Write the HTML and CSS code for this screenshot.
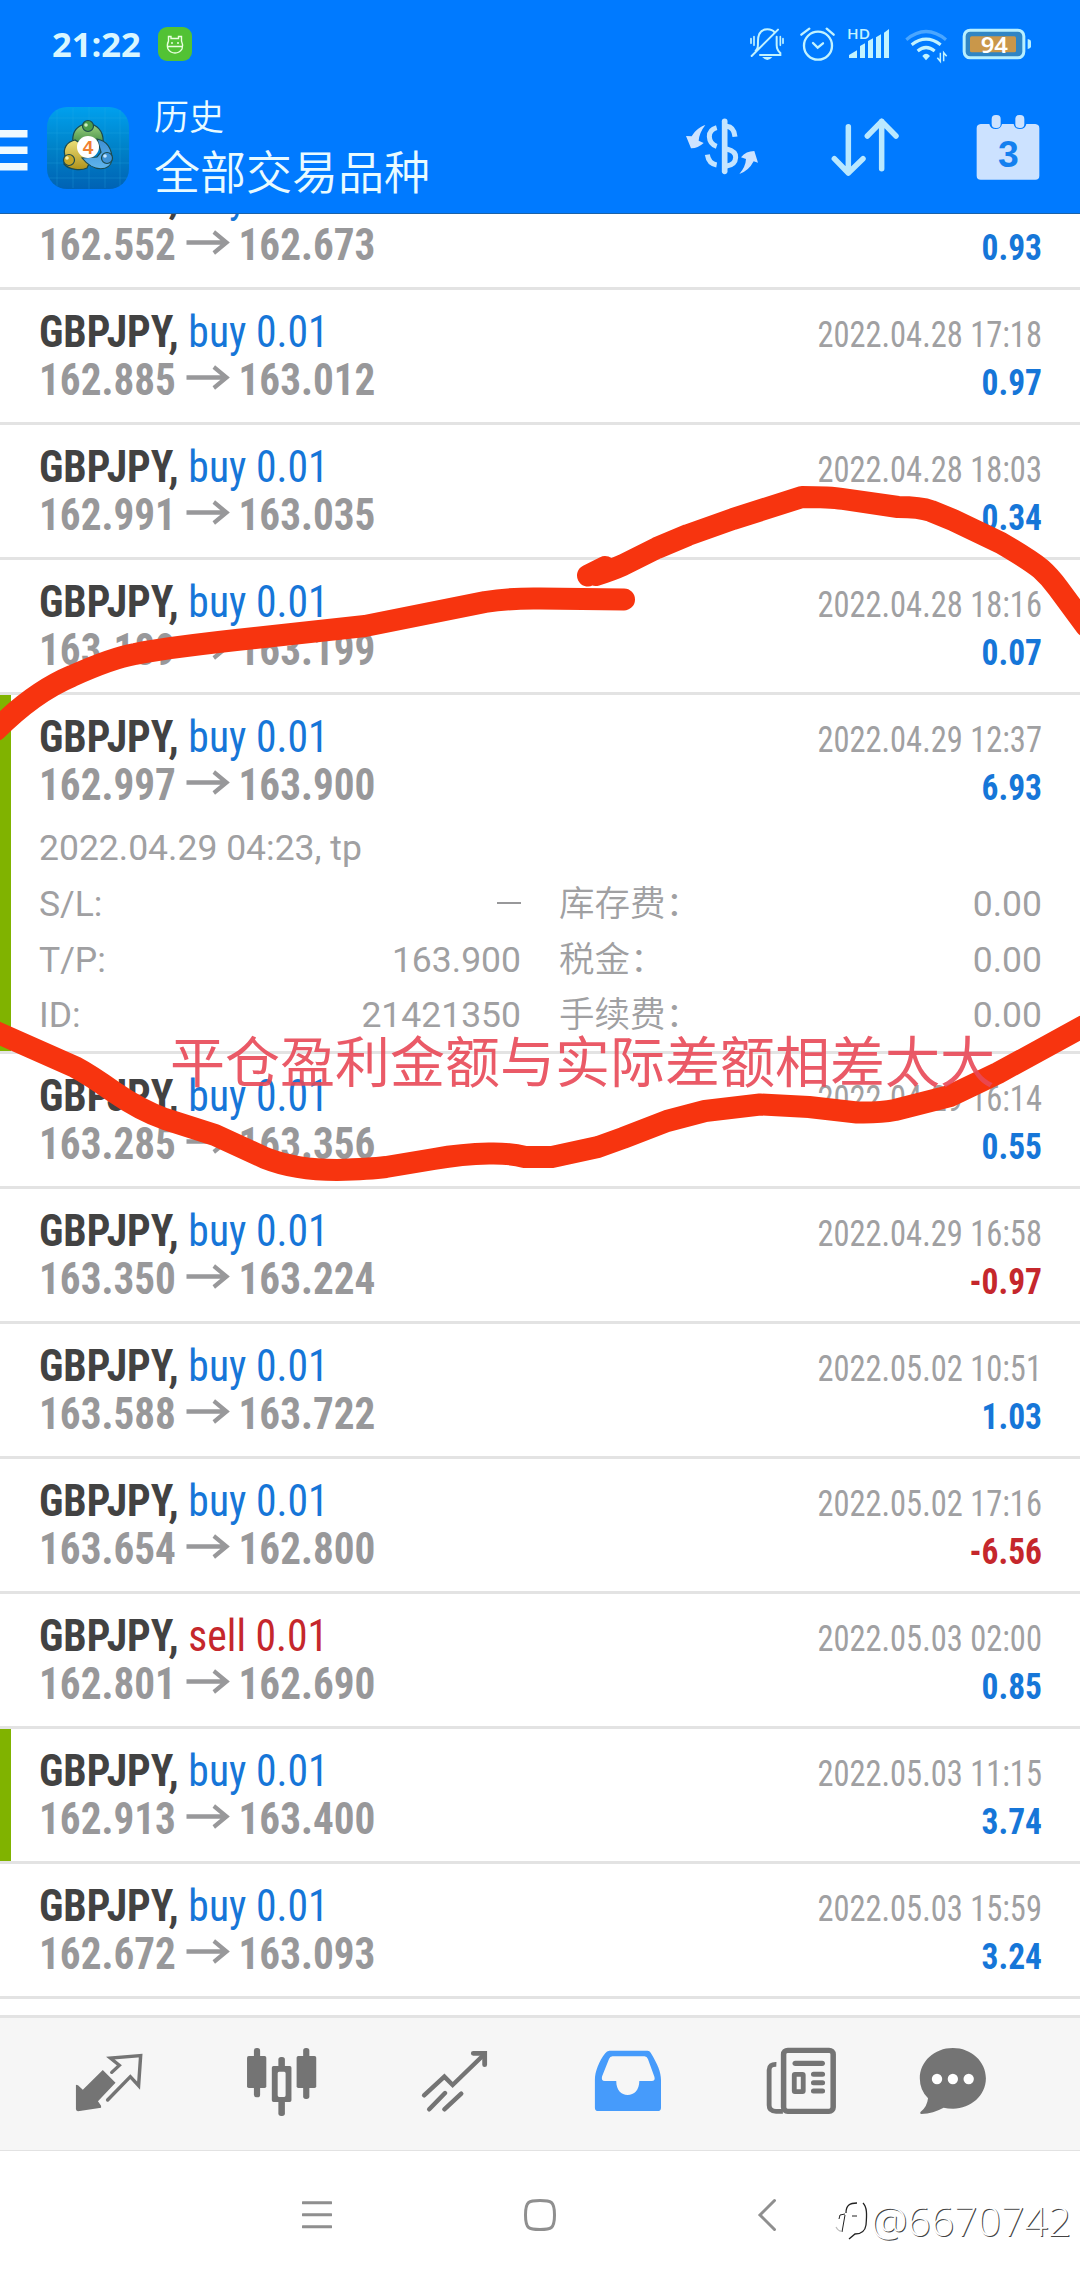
FILE: index.html
```html
<!DOCTYPE html>
<html lang="zh-CN">
<head>
<meta charset="utf-8">
<title>历史</title>
<link rel="stylesheet" href="styles.css">
</head>
<body>
<svg class="defs" width="0" height="0" aria-hidden="true">
  <symbol id="arrow" viewBox="0 0 44 24"><path d="M0 12H41M28 2L41 12L28 22" fill="none" stroke="currentColor" stroke-width="4.200"/></symbol>
</svg>
<div class="screen">
  <header class="top">
    <div class="status">
      <span class="clock">21:22</span>
      <svg class="app-badge" viewBox="0 0 34 34"><rect width="34" height="34" rx="9" fill="#52c234"/><g fill="none" stroke="#e9ffe0" stroke-width="1.4"><path d="M10.500 14V9.500H13V11.500H20.500V9.500H23.500V14Q25.500 18 24 22Q21.500 26 17 26Q12.500 26 10 22Q8.500 18 10.500 14ZM9.500 19.500H24.500"/></g><circle cx="14" cy="16" r="1" fill="#e9ffe0"/><circle cx="20" cy="16" r="1" fill="#e9ffe0"/></svg>
      <div class="status-icons">
        <svg width="40" height="40" viewBox="435 75 120 120" fill="none" stroke="#c2f3ff" stroke-width="6" stroke-linecap="round"><path d="M467 152C474 146 474 140 474 124C474 100 484 88 502 88C513 88 520 92 524 98M530 110V135C530 148 534 153 541 159V165H480M455 168L534 89"/><path d="M487 171Q502 189 517 171Z" fill="#c2f3ff" stroke="none"/><path d="M453 116V130M462 110V136M541 110V136M549 116V130" stroke-width="5"/></svg>
        <svg width="40" height="40" viewBox="588 75 120 120" fill="none" stroke="#c2f3ff" stroke-width="7" stroke-linecap="round"><circle cx="654" cy="137" r="42"/><path d="M639 129L653 143L669 130M604 104L628 86M680 86L701 104"/></svg>
        <svg width="46" height="40" viewBox="741 75 138 120"><text x="741" y="116" class="hd" textLength="69" lengthAdjust="spacingAndGlyphs">HD</text><g fill="#c2f3ff"><path d="M747 174V165L771 151V174ZM780 174V138L795 130V174ZM804 174V123L819 115V174ZM828 174V112L843 103V174ZM852 174V98L867 87V174Z"/></g></svg>
        <svg width="47" height="40" viewBox="912 75 141 120" fill="none" stroke="#c2f3ff" stroke-width="9.500"><path d="M919 119Q978 70 1038 119" stroke="#4aa6ff"/><path d="M935 134Q978 101 1022 134"/><path d="M953 153Q978 132 1004 153"/><path d="M967 168Q978 155 990 168L978 181Z" fill="#c2f3ff" stroke="none"/><path d="M1021 158V184L1012 173M1031 184V158L1040 169" stroke-width="4.500"/></svg>
        <svg width="72" height="40" viewBox="1086 75 216 120"><rect x="1092.500" y="90.500" width="179" height="83" rx="18" fill="#2f85c4" stroke="#b8efff" stroke-width="9"/><rect x="1110" y="109" width="138" height="48" rx="5" fill="#c9974a"/><path d="M1283 117q10 2 10 8v14q0 6-10 8Z" fill="#b8efff"/><text x="1142" y="158" class="batt" textLength="82" lengthAdjust="spacingAndGlyphs">94</text></svg>
      </div>
    </div>
    <div class="appbar">
      <svg class="menu" viewBox="0 0 28 41"><path d="M0 0H27.500V7.500H0ZM0 16.500H27.500V24H0ZM0 33H27.500V40.500H0Z" fill="#f0faff"/></svg>
      <svg class="logo" viewBox="0 0 82 82">
        <defs>
          <linearGradient id="lg" x1="0" y1="0" x2="0" y2="1"><stop offset="0" stop-color="#00a0ee"/><stop offset=".5" stop-color="#0082c8"/><stop offset="1" stop-color="#0062b4"/></linearGradient>
          <linearGradient id="gr" x1="0" y1="0" x2="0" y2="1"><stop offset="0" stop-color="#9ad07c"/><stop offset="1" stop-color="#2f7d3b"/></linearGradient>
          <linearGradient id="ye" x1="0" y1="0" x2="0" y2="1"><stop offset="0" stop-color="#ece07a"/><stop offset="1" stop-color="#b0921a"/></linearGradient>
          <linearGradient id="bl" x1="0" y1="0" x2="0" y2="1"><stop offset="0" stop-color="#3d8fd4"/><stop offset="1" stop-color="#5fb4ec"/></linearGradient>
        </defs>
        <rect width="82" height="82" rx="20" fill="url(#lg)"/>
        <path d="M10 3V79M26 1V81M42 0V82M58 1V81M73 3V79M2 11H80M0 26H82M0 42H82M0 56H82M2 71H80" stroke="#2cb0e8" stroke-opacity=".25" fill="none"/>
        <g stroke="#1c4a4d" stroke-width="1.200">
          <path d="M35 18C28 21 25 28 26 36L33 40H50L55 41C58 31 55 22 47 18Z" fill="url(#gr)"/>
          <path d="M28 33C19 35 16 42 18 49L17 57C22 63 34 64 40 61L45 50L36 38Z" fill="url(#ye)"/>
          <path d="M50 32C60 34 65 42 65 53C63 64 47 66 35 51L50 50L54 45Z" fill="url(#bl)"/>
          <circle cx="41" cy="19" r="5.500" fill="#4c9d4a"/><circle cx="22" cy="53" r="5.500" fill="#c6a728"/><circle cx="60" cy="51" r="5.500" fill="#3e92d6"/>
        </g>
        <circle cx="39" cy="18" r="1.800" fill="#cdeec0"/><circle cx="20" cy="51" r="1.800" fill="#f6efb0"/><circle cx="58" cy="49" r="1.800" fill="#c4e6ff"/>
        <circle cx="41" cy="40" r="11" fill="#fff"/>
        <text x="41" y="47" class="four">4</text>
      </svg>
      <div class="titles">
        <div class="title">历史</div>
        <div class="subtitle">全部交易品种</div>
      </div>
      <div class="actions">
        <svg viewBox="246 339 240 210" fill="#cde3ff"><path d="M316 375C305 378 287 388 275 409L258 408L273 445Q292 446 311 429L296 422Q298 398 316 375Z"/><path d="M418 522Q446 513 461 484L474 488L463 453Q438 453 423 472L438 477Q437 500 418 522Z"/><g fill="none" stroke="#c4e4ff" stroke-width="15"><path d="M374 364V514" stroke-width="17" stroke-linecap="round"/><path d="M350 383Q328 389 328 410Q329 432 350 439M322 464Q326 491 350 495"/><path d="M380 379Q402 381 405 410M380 447Q408 454 407 472Q406 494 380 498"/></g></svg>
        <svg viewBox="675 339 240 210" fill="none" stroke="#b9e8ff" stroke-width="16.500" stroke-linecap="round" stroke-linejoin="round"><path d="M745 380V519M703 476L745 519L789 476M845 506V364M802 408L845 364L888 408"/></svg>
        <svg viewBox="1104 339 240 210"><path d="M1142 372H1168Q1171 387 1187 387Q1203 387 1206 372H1241Q1244 387 1260 387Q1276 387 1279 372H1306Q1318 373 1318 385V527Q1318 539 1306 539H1142Q1130 539 1130 527V385Q1130 373 1142 372Z" fill="#cce2ff"/><rect x="1175" y="345" width="27" height="39" rx="12" fill="#cce2ff"/><rect x="1246" y="345" width="27" height="39" rx="12" fill="#cce2ff"/><text x="1225" y="502" class="cal">3</text></svg>
      </div>
    </div>
  </header>

  <main class="list">
    <div class="rows">
      <article class="row"><div class="line"><span class="sym"><b>GBPJPY,</b> <i>buy 0.01</i></span></div><div class="line"><span class="px">162.552<svg class="ar"><use href="#arrow"/></svg>162.673</span><span class="pl">0.93</span></div></article>
      <article class="row"><div class="line"><span class="sym"><b>GBPJPY,</b> <i>buy 0.01</i></span><time>2022.04.28 17:18</time></div><div class="line"><span class="px">162.885<svg class="ar"><use href="#arrow"/></svg>163.012</span><span class="pl">0.97</span></div></article>
      <article class="row"><div class="line"><span class="sym"><b>GBPJPY,</b> <i>buy 0.01</i></span><time>2022.04.28 18:03</time></div><div class="line"><span class="px">162.991<svg class="ar"><use href="#arrow"/></svg>163.035</span><span class="pl">0.34</span></div></article>
      <article class="row"><div class="line"><span class="sym"><b>GBPJPY,</b> <i>buy 0.01</i></span><time>2022.04.28 18:16</time></div><div class="line"><span class="px">163.189<svg class="ar"><use href="#arrow"/></svg>163.199</span><span class="pl">0.07</span></div></article>
      <article class="row open tp"><div class="line"><span class="sym"><b>GBPJPY,</b> <i>buy 0.01</i></span><time>2022.04.29 12:37</time></div><div class="line"><span class="px">162.997<svg class="ar"><use href="#arrow"/></svg>163.900</span><span class="pl">6.93</span></div>
        <div class="opened">2022.04.29 04:23, tp</div>
        <dl class="details">
          <dt>S/L:</dt><dd><span class="dash"></span></dd><dt>库存费：</dt><dd>0.00</dd>
          <dt>T/P:</dt><dd>163.900</dd><dt>税金：</dt><dd>0.00</dd>
          <dt>ID:</dt><dd>21421350</dd><dt>手续费：</dt><dd>0.00</dd>
        </dl>
      </article>
      <article class="row"><div class="line"><span class="sym"><b>GBPJPY,</b> <i>buy 0.01</i></span><time>2022.04.29 16:14</time></div><div class="line"><span class="px">163.285<svg class="ar"><use href="#arrow"/></svg>163.356</span><span class="pl">0.55</span></div></article>
      <article class="row"><div class="line"><span class="sym"><b>GBPJPY,</b> <i>buy 0.01</i></span><time>2022.04.29 16:58</time></div><div class="line"><span class="px">163.350<svg class="ar"><use href="#arrow"/></svg>163.224</span><span class="pl neg">-0.97</span></div></article>
      <article class="row"><div class="line"><span class="sym"><b>GBPJPY,</b> <i>buy 0.01</i></span><time>2022.05.02 10:51</time></div><div class="line"><span class="px">163.588<svg class="ar"><use href="#arrow"/></svg>163.722</span><span class="pl">1.03</span></div></article>
      <article class="row"><div class="line"><span class="sym"><b>GBPJPY,</b> <i>buy 0.01</i></span><time>2022.05.02 17:16</time></div><div class="line"><span class="px">163.654<svg class="ar"><use href="#arrow"/></svg>162.800</span><span class="pl neg">-6.56</span></div></article>
      <article class="row"><div class="line"><span class="sym"><b>GBPJPY,</b> <i class="sell">sell 0.01</i></span><time>2022.05.03 02:00</time></div><div class="line"><span class="px">162.801<svg class="ar"><use href="#arrow"/></svg>162.690</span><span class="pl">0.85</span></div></article>
      <article class="row tp"><div class="line"><span class="sym"><b>GBPJPY,</b> <i>buy 0.01</i></span><time>2022.05.03 11:15</time></div><div class="line"><span class="px">162.913<svg class="ar"><use href="#arrow"/></svg>163.400</span><span class="pl">3.74</span></div></article>
      <article class="row"><div class="line"><span class="sym"><b>GBPJPY,</b> <i>buy 0.01</i></span><time>2022.05.03 15:59</time></div><div class="line"><span class="px">162.672<svg class="ar"><use href="#arrow"/></svg>163.093</span><span class="pl">3.24</span></div></article>
      <div class="end"></div>
    </div>
  </main>

  <nav class="tabs">
    <svg viewBox="210.500 246 209.100 252" preserveAspectRatio="none"><path d="M297 330L334 368L283 424L292 437V443L225 454Q219 453 219 447V374L225 376L239 389Z" fill="#747474"/><path d="M323 337L345 316L319 294L407 287L401 377L377 350L311 420" fill="none" stroke="#747474" stroke-width="10" stroke-linecap="round"/></svg>
    <svg viewBox="713 246 209.100 252" preserveAspectRatio="none" fill="#747474"><rect x="736" y="264" width="18" height="148" rx="8"/><rect x="716" y="288" width="56" height="96" rx="5"/><rect x="879" y="264" width="18" height="153" rx="8"/><rect x="860" y="288" width="57" height="96" rx="5"/><rect x="807" y="291" width="19" height="40" rx="8"/><rect x="807" y="415" width="19" height="53" rx="8"/><path fill-rule="evenodd" d="M793 318H840Q845 318 845 323V421Q845 426 840 426H793Q788 426 788 421V323Q788 318 793 318ZM809 335Q805 335 805 340V406Q805 411 809 411H824Q828 411 828 406V340Q828 335 824 335Z"/></svg>
    <svg viewBox="1215.300 246 209.100 252" preserveAspectRatio="none" fill="none" stroke="#747474" stroke-width="13" stroke-linecap="round"><path d="M1230 406L1289 350L1313 375L1402 286M1245 448L1291 399M1289 448L1338 401"/><path d="M1373 280H1406V314" stroke-width="14"/></svg>
    <svg viewBox="149.600 246 209.100 252" preserveAspectRatio="none" fill="#469bfb"><path fill-rule="evenodd" d="M200 272H311Q317 272 320 278C340 312 350 335 350 360V443Q350 453 340 453H168Q158 453 158 443V360C158 335 170 304 188 280Q193 272 200 272ZM209 289Q202 289 199 297L179 349Q175 363 187 363H220C220 390 235 405 253 405C272 405 287 390 287 363H323Q334 363 331 351L312 297Q309 289 302 289Z"/></svg>
    <svg viewBox="652 246 209.100 252" preserveAspectRatio="none" fill="none" stroke="#747474"><rect x="706" y="271" width="144" height="183" rx="12" stroke-width="16"/><path d="M685 313Q664 312 664 330V436Q664 454 684 454H704" stroke-width="14"/><path d="M740 310H818" stroke-width="16" stroke-linecap="round"/><path d="M793 343H819M793 368H819M793 393H819" stroke-width="15" stroke-linecap="round"/><rect x="737" y="343" width="26" height="52" rx="2" stroke-width="14"/></svg>
    <svg viewBox="1094.900 246 209.100 252" preserveAspectRatio="none"><path d="M1199 264C1253 264 1295 305 1295 355C1295 407 1251 446 1200 446Q1184 446 1172 443Q1143 460 1107 462Q1102 461 1105 456Q1124 442 1127 415Q1103 391 1103 355C1103 305 1145 264 1199 264Z" fill="#747474"/><g fill="#fff"><ellipse cx="1153" cy="357" rx="15" ry="16"/><ellipse cx="1199" cy="357" rx="15" ry="16"/><ellipse cx="1245" cy="357" rx="15" ry="16"/></g></svg>
  </nav>

  <footer class="sysnav">
    <svg class="recents" width="30" height="34" viewBox="0 0 30 34"><path d="M1 4.700H29M1 16.700H29M1 28.700H29" stroke="#8f8f8f" stroke-width="3" stroke-linecap="round"/></svg>
    <svg class="home" width="34" height="34" viewBox="0 0 34 34"><path d="M17 2.500C28 2.500 31.500 3 31.500 17S28 31.500 17 31.500S2.500 31 2.500 17S6 2.500 17 2.500Z" fill="none" stroke="#8f8f8f" stroke-width="3"/></svg>
    <svg class="back" width="20" height="34" viewBox="0 0 20 34"><path d="M17.500 2.500L3 17L17.500 31.500" fill="none" stroke="#8f8f8f" stroke-width="3" stroke-linecap="round"/></svg>
    <div class="mark">
      <svg width="36" height="42" viewBox="0 0 36 42"><g fill="none" stroke="#222" stroke-width="1.300"><path d="M11 14C11 6 15 4 22 4M28 4C32 8 32 15 31 26C30 33 25 35 20 35L14 40"/><path d="M4 20L5 16L10 15M10 16L7 33M17 17H22" stroke-width="1"/><path d="M1 28Q4 33 7 32" stroke="#bbb"/></g></svg>
      <span>@6670742</span>
    </div>
  </footer>

  <svg class="ink" viewBox="0 0 1080 2280"><g fill="none" stroke="#f7340f" stroke-width="22" stroke-linecap="round" stroke-linejoin="round"><path d="M-4 730Q34 692 72 676Q112 658 135 654Q170 647 255 638L365 626L430 613L485 602Q510 598 540 598.500L624 599.500"/><path d="M588 575.500L605 567L596 575Q612 570 623 565L657 548L688 535L733 519L802 497Q830 497 843 499L898 507Q920 507 931 511L953 520L1001 543Q1030 560 1041 569Q1050 577 1058 588L1086 626"/><path d="M-4 1032L75 1067Q90 1075 114 1092Q140 1110 165 1119L215 1135L265 1158Q295 1170 337 1170Q370 1169 386 1167L434 1159Q462 1154 489 1153.500Q510 1153 525 1157L552 1157L598 1147L623 1138L667 1121L705 1111L760 1104.500L809 1107L857 1112.500Q880 1113 895 1110L950 1096L998 1073L1084 1026"/></g></svg>
  <p class="note">平仓盈利金额与实际差额相差太大</p>
</div>
</body>
</html>
```
FILE: styles.css
```css
* { box-sizing: border-box; }
body { margin: 0; background: #fff; font-family: Roboto, "Noto Sans CJK SC", sans-serif; }
svg { display: block; flex: none; }
.defs { position: absolute; }
.screen { position: relative; width: 1080px; height: 2280px; overflow: hidden; display: flex; flex-direction: column; background: #fff; }

.top { height: 214px; flex: none; background: #007aff; border-bottom: 1px solid #1b62a8; display: flex; flex-direction: column; }
.status { height: 88px; display: flex; align-items: center; padding: 0 46px 0 52px; }
.clock { font: 700 34.500px/40px "Open Sans", sans-serif; color: #d9f6ff; width: 106px; }
.app-badge { width: 34px; height: 34px; }
.status-icons { display: flex; gap: 11px; margin-left: auto; margin-top: 2px; }
.hd { font: 600 42px "Open Sans", sans-serif; fill: #c2f3ff; }
.batt { font: 600 66px "Noto Sans", sans-serif; fill: #fff; }

.appbar { flex: 1; display: flex; align-items: flex-start; padding-right: 32px; }
.menu { width: 28px; height: 41px; margin-top: 41.500px; }
.logo { width: 82px; height: 82px; margin: 19px 0 0 19px; }
.four { font: 700 19px "Liberation Sans", sans-serif; fill: #f08030; text-anchor: middle; }
.titles { margin: 2px 0 0 25px; color: #e9fbff; font-family: "Noto Sans CJK SC", sans-serif; font-weight: 350; }
.title { font-size: 35px; line-height: 50px; }
.subtitle { font-size: 46px; line-height: 60px; margin-top: -1px; }
.actions { display: flex; gap: 63px; margin: 25px 0 0 auto; }
.actions svg { width: 80px; height: 70px; }
.cal { font: 700 112px "Liberation Sans", sans-serif; fill: #1480ef; text-anchor: middle; }

.list { flex: none; height: 1801px; overflow: hidden; }
.rows { margin-top: -62px; }
.row { height: 135px; border-top: 3px solid #e3e3e3; padding: 18px 38px 0 39px; }
.row.open { height: 359px; }
.row.tp { box-shadow: inset 11px 0 #80b300; }
.line { height: 48px; line-height: 48px; display: flex; align-items: baseline; justify-content: space-between; white-space: nowrap; font-family: "Roboto Condensed", Roboto, sans-serif; font-stretch: 75%; }
.sym, .px { font-size: 44px; transform-origin: left; }
.sym { color: #424242; transform: scaleX(.946); }
.sym i { font-style: normal; color: #1676d8; }
.sym i.sell { color: #c5272c; }
.px { display: flex; align-items: baseline; font-weight: 700; color: #98989a; transform: scaleX(.936); }
.ar { width: 47px; height: 25px; margin: 0 9px 0 11px; position: relative; top: -5px; }
time { font-size: 36px; font-weight: 400; color: #a0a0a2; transform: scaleX(.902); transform-origin: right; }
.pl { font-size: 36px; font-weight: 700; color: #1676d8; transform: scaleX(.93); transform-origin: right; }
.pl.neg { color: #c5272c; }
.opened { font-size: 35.500px; line-height: 42px; margin-top: 18px; color: #a0a0a2; }
.details { margin: 8px 0 0; display: grid; grid-template-columns: 130px 352px 200px 1fr; font-size: 35.500px; font-weight: 400; line-height: 55.500px; color: #a0a0a2; }
.details dt:nth-of-type(even) { padding-left: 38px; white-space: nowrap; font-weight: 350; }
.details dt, .details dd { margin: 0; height: 55.500px; }
.details dd { text-align: right; }
.dash { display: inline-block; width: 24px; height: 2.500px; background: #98989a; vertical-align: 12px; }
.end { border-top: 3px solid #e3e3e3; height: 30px; }

.tabs { flex: none; height: 136px; border-top: 3px solid #e3e3e3; border-bottom: 1px solid #e2e2e2; background: #f6f6f6; display: grid; grid-template-columns: repeat(5, 173px) 132px; justify-items: center; align-items: center; padding-left: 22px; }
.tabs svg { width: 72px; height: 84px; }

.sysnav { flex: 1; display: flex; align-items: flex-start; padding-left: 302px; }
.sysnav > svg { margin-top: 47px; }
.home { margin-left: 191px; }
.back { margin-left: 200px; }
.mark { display: flex; align-items: flex-start; margin: 48px 0 0 58px; font: 300 41px/42px "Open Sans", sans-serif; color: #fff; text-shadow: 1px 1px 0 #444; }

.ink { position: absolute; inset: 0; width: 1080px; height: 2280px; }
.note { position: absolute; left: 170px; top: 1023px; margin: 0; font: 400 55px/70px "Noto Sans CJK SC", sans-serif; color: rgba(232, 72, 86, .9); white-space: nowrap; }
```
